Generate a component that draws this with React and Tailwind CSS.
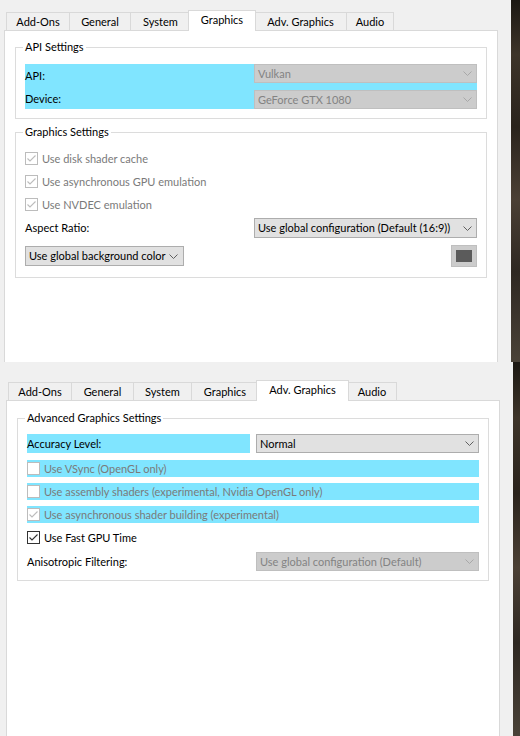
import React from 'react';
import clsx from 'clsx';

const Chevron = ({ color }) => (
  <svg width="9" height="5" viewBox="0 0 9 5" className="shrink-0">
    <path d="M0.5 0.5 L4.5 4.5 L8.5 0.5" fill="none" stroke={color} strokeWidth="1" />
  </svg>
);

const Combo = ({ text, disabled, className }) => (
  <div
    className={clsx(
      'flex items-center justify-between border pl-[3px] pr-[4px] whitespace-nowrap overflow-hidden',
      disabled ? 'bg-[#cccccc] border-[#bfbfbf] text-[#838383]' : 'bg-[#e1e1e1] border-[#adadad] text-black',
      className
    )}
  >
    <span>{text}</span>
    <Chevron color={disabled ? '#a8a8a8' : '#606060'} />
  </div>
);

const CheckBox = ({ label, checked, disabled, highlight }) => (
  <div className={clsx('flex items-center h-[17px]', highlight && 'bg-[#80e5ff]')}>
    <div
      className={clsx(
        'w-[13px] h-[13px] border bg-white flex items-center justify-center',
        disabled ? 'border-[#bcbcbc]' : 'border-[#333333]'
      )}
    >
      {checked && (
        <svg width="11" height="11" viewBox="0 0 11 11">
          <path d="M1.5 5.5 L4 8 L9.5 2.5" fill="none" stroke={disabled ? '#bcbcbc' : '#333333'} strokeWidth="1.1" />
        </svg>
      )}
    </div>
    <span className={clsx('ml-[4px]', disabled ? 'text-[#7a7a7a]' : 'text-black')}>{label}</span>
  </div>
);

const TABS = ['Add-Ons', 'General', 'System', 'Graphics', 'Adv. Graphics', 'Audio'];

const TabBar = ({ widths, selected }) => (
  <div className="flex items-end h-[20px] pl-[2px]">
    {TABS.map((t, i) =>
      i === selected ? (
        <div
          key={t}
          style={{ width: widths[i] + 4 }}
          className="relative z-10 -mx-[2px] -mb-px h-[21px] bg-white border border-b-0 border-[#d9d9d9] flex items-center justify-center pb-[2px]"
        >
          {t}
        </div>
      ) : (
        <div
          key={t}
          style={{ width: widths[i] }}
          className={clsx(
            'h-[18px] bg-[#f0f0f0] border-t border-l border-[#d9d9d9] flex items-center justify-center',
            i === TABS.length - 1 && 'border-r'
          )}
        >
          {t}
        </div>
      )
    )}
  </div>
);

const Group = ({ title, className, children }) => (
  <fieldset className={clsx('border border-[#dcdcdc] px-[9px]', className)}>
    <legend className="-ml-[2px] px-[2px] leading-[16px]">{title}</legend>
    {children}
  </fieldset>
);

const Strip = ({ className }) => (
  <div
    className={clsx(
      'bg-[linear-gradient(180deg,#1c1813,#3d3429_15%,#2a231c_35%,#4b4035_55%,#2e2822_75%,#4a4238)]',
      className
    )}
  />
);

const GraphicsTab = () => (
  <div className="flex h-[362px]">
    <div className="w-[511px] bg-[#f0f0f0] flex flex-col pl-[4px] pt-[10px]">
      <TabBar widths={[63, 61, 60, 64, 92, 48]} selected={3} />
      <div className="w-[494px] flex-1 bg-white border border-b-0 border-[#d9d9d9] pt-[8px] px-[10px]">
        <Group title="API Settings" className="pb-[9px]">
          <div className="mt-[9px] bg-[#80e5ff] flex">
            <div className="flex-1 flex flex-col">
              <div className="flex-1 flex items-center pt-[2px]">API:</div>
              <div className="flex-1 flex items-center pt-[2px]">Device:</div>
            </div>
            <div className="w-[223px] flex flex-col gap-[7px]">
              <Combo text="Vulkan" disabled className="h-[19px]" />
              <Combo text="GeForce GTX 1080" disabled className="h-[19px]" />
            </div>
          </div>
        </Group>
        <Group title="Graphics Settings" className="mt-[5px] pb-[10px]">
          <div className="pt-[10px] flex flex-col gap-[6px]">
            <CheckBox label="Use disk shader cache" checked disabled />
            <CheckBox label="Use asynchronous GPU emulation" checked disabled />
            <CheckBox label="Use NVDEC emulation" checked disabled />
          </div>
          <div className="mt-[5px] flex items-center justify-between">
            <span>Aspect Ratio:</span>
            <Combo text="Use global configuration (Default (16:9))" className="w-[223px] h-[20px]" />
          </div>
          <div className="mt-[7px] flex items-center justify-between h-[22px]">
            <Combo text="Use global background color" className="w-[159px] h-[20px] pr-[5px]" />
            <div className="w-[26px] h-[22px] bg-[#cccccc] border border-[#bfbfbf] flex items-center justify-center">
              <div className="w-[16px] h-[12px] bg-[#5b5b5b]" />
            </div>
          </div>
        </Group>
      </div>
    </div>
    <Strip className="w-[9px]" />
  </div>
);

const AdvGraphicsTab = () => (
  <div className="flex h-[374px]">
    <div className="w-[513px] bg-[#f0f0f0] flex flex-col pl-[6px] pt-[18px]">
      <TabBar widths={[63, 62, 58, 67, 89, 50]} selected={4} />
      <div className="w-[494px] flex-1 bg-white border border-b-0 border-[#d9d9d9] pt-[9px] px-[10px]">
        <Group title="Advanced Graphics Settings" className="pb-[9px]">
          <div className="mt-[8px] flex items-center justify-between">
            <div className="w-[223px] h-[19px] bg-[#80e5ff] flex items-center">Accuracy Level:</div>
            <Combo text="Normal" className="w-[223px] h-[19px]" />
          </div>
          <div className="mt-[7px] flex flex-col gap-[6px]">
            <CheckBox label="Use VSync (OpenGL only)" disabled highlight />
            <CheckBox label="Use assembly shaders (experimental, Nvidia OpenGL only)" disabled highlight />
            <CheckBox label="Use asynchronous shader building (experimental)" checked disabled highlight />
            <CheckBox label="Use Fast GPU Time" checked />
          </div>
          <div className="mt-[6px] flex items-center justify-between">
            <span>Anisotropic Filtering:</span>
            <Combo text="Use global configuration (Default)" disabled className="w-[223px] h-[19px]" />
          </div>
        </Group>
      </div>
    </div>
    <Strip className="w-[7px]" />
  </div>
);

export default function App() {
  return (
    <div className="w-[520px] h-[736px] overflow-hidden font-['Lato','Noto_Sans',sans-serif] text-[11px] text-black leading-[16px]">
      <GraphicsTab />
      <AdvGraphicsTab />
    </div>
  );
}
